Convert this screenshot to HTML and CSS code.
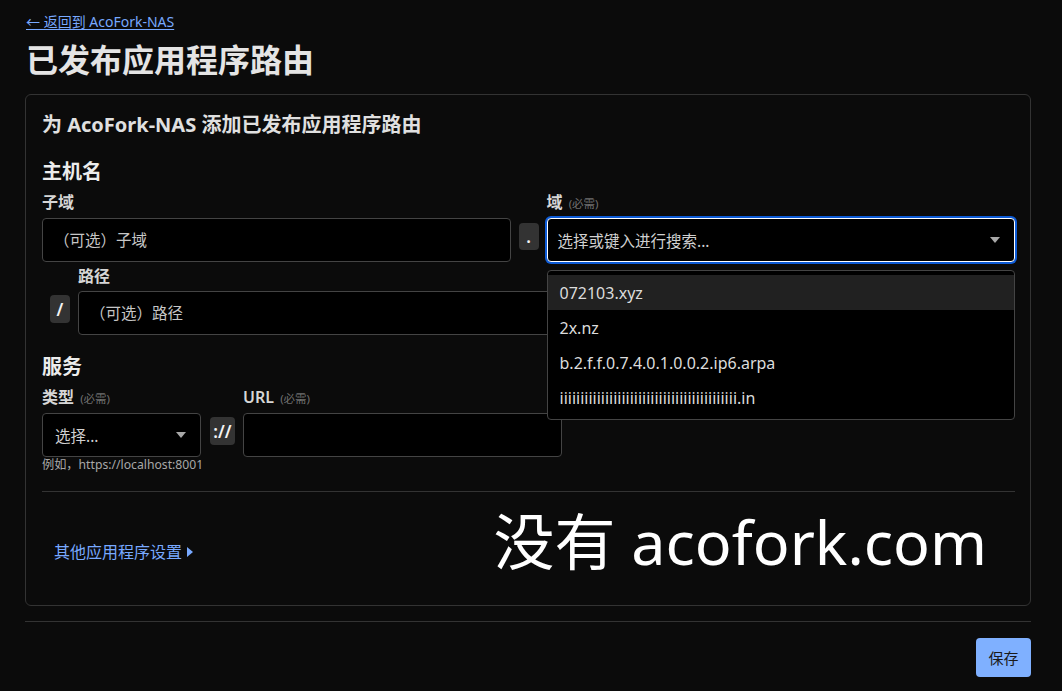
FILE: index.html
```html
<!DOCTYPE html>
<html lang="zh-CN">
<head>
<meta charset="utf-8">
<title>已发布应用程序路由</title>
<link rel="stylesheet" href="styles.css">
</head>
<body>
<a class="back-link" href="#">← 返回到 AcoFork-NAS</a>
<h1 class="page-title">已发布应用程序路由</h1>

<section class="card">
  <h2 class="card-title">为 AcoFork-NAS 添加已发布应用程序路由</h2>

  <h3 class="group-title">主机名</h3>
  <div class="host-row">
    <div class="field field-grow">
      <label class="label">子域</label>
      <input class="input" type="text" placeholder="（可选）子域">
    </div>
    <span class="sep sep-dot">.</span>
    <div class="field field-grow">
      <label class="label">域 <span class="req">(必需)</span></label>
      <div class="combo">
        <div class="select is-focused">
          <span class="select-text">选择或键入进行搜索...</span>
          <span class="caret"></span>
        </div>
        <ul class="menu">
          <li class="menu-item is-active">072103.xyz</li>
          <li class="menu-item">2x.nz</li>
          <li class="menu-item">b.2.f.f.0.7.4.0.1.0.0.2.ip6.arpa</li>
          <li class="menu-item">iiiiiiiiiiiiiiiiiiiiiiiiiiiiiiiiiiiiiiiiiii.in</li>
        </ul>
      </div>
    </div>
  </div>

  <div class="path-block">
    <label class="label path-label">路径</label>
    <div class="path-row">
      <span class="sep sep-slash">/</span>
      <input class="input path-input" type="text" placeholder="（可选）路径">
    </div>
  </div>

  <h3 class="group-title service-title">服务</h3>
  <div class="service-row">
    <div class="field field-type">
      <label class="label">类型 <span class="req">(必需)</span></label>
      <div class="select">
        <span class="select-text">选择...</span>
        <span class="caret"></span>
      </div>
      <p class="hint">例如，https://localhost:8001</p>
    </div>
    <span class="sep sep-scheme">://</span>
    <div class="field field-url">
      <label class="label">URL <span class="req">(必需)</span></label>
      <input class="input" type="text">
    </div>
  </div>

  <div class="settings-row">
    <a class="more-link" href="#">其他应用程序设置 <span class="tri"></span></a>
    <span class="notice">没有 acofork.com</span>
  </div>
</section>

<div class="footer">
  <button class="btn-save" type="button">保存</button>
</div>
</body>
</html>
```

FILE: styles.css
```css
* {
  box-sizing: border-box;
}

body {
  margin: 0;
  padding: 10px 31px 14px 25px;
  background: #0b0b0b;
  color: #e0e0e0;
  font-family: "Noto Sans", "Noto Sans CJK SC", sans-serif;
}

.back-link {
  display: inline-block;
  margin-left: 1px;
  font-size: 14px;
  line-height: 18px;
  color: #78a9ff;
  text-decoration: underline;
  text-underline-offset: 2px;
}

.page-title {
  margin: 8px 0 14px 1px;
  font-size: 32px;
  line-height: 40px;
  font-weight: 700;
  color: #e4e4e4;
}

/* main form card */
.card {
  border: 1px solid #333;
  border-radius: 6px;
  padding: 16px 15px 16px 16px;
}

.card-title {
  margin: 0;
  font-size: 20px;
  line-height: 28px;
  font-weight: 700;
  color: #e0e0e0;
}

.group-title {
  margin: 20px 0 0;
  font-size: 20px;
  line-height: 26px;
  font-weight: 700;
  color: #ececec;
}

.label {
  display: block;
  height: 20px;
  font-size: 16px;
  line-height: 20px;
  font-weight: 600;
  color: #d6d6d6;
}

.req {
  margin-left: 2px;
  font-size: 11.5px;
  line-height: 1;
  font-weight: 400;
  color: #6f6f6f;
}

.field {
  display: flex;
  flex-direction: column;
  gap: 6px;
}

.input {
  height: 44px;
  width: 100%;
  padding: 0 11px;
  background: #000;
  border: 1px solid #444;
  border-radius: 4px;
  color: #e0e0e0;
  font-family: "Noto Sans", "Noto Sans CJK SC", sans-serif;
  font-size: 15.5px;
  outline: none;
}

.input::placeholder {
  color: #c6c6c6;
}

.sep {
  display: flex;
  align-items: center;
  justify-content: center;
  height: 28px;
  background: #333;
  border-radius: 4px;
  color: #f4f4f4;
  font-size: 17px;
  font-weight: 600;
  line-height: 1;
}

/* hostname: subdomain . domain */
.host-row {
  display: flex;
  align-items: flex-end;
  gap: 8px;
  margin-top: 7px;
}

.field-grow {
  flex: 1 1 0;
  min-width: 0;
}

.sep-dot {
  width: 20px;
  margin-bottom: 12px;
  height: 27px;
}

.combo {
  position: relative;
}

.select {
  position: relative;
  display: flex;
  align-items: center;
  height: 44px;
  padding: 0 12px;
  background: #000;
  border: 1px solid #444;
  border-radius: 4px;
  font-size: 15.5px;
  color: #d0d0d0;
}

.select.is-focused {
  border-color: #fff;
  box-shadow: 0 0 0 2px #0d5bd6;
  padding-left: 10px;
}

.select-text {
  flex: 1;
}

.caret {
  width: 0;
  height: 0;
  border-left: 5px solid transparent;
  border-right: 5px solid transparent;
  border-top: 6px solid #a8a8a8;
  margin-right: 2px;
}

.menu {
  position: absolute;
  z-index: 5;
  top: 52px;
  left: 0;
  right: 0;
  margin: 0;
  padding: 4px 0;
  list-style: none;
  background: #000;
  border: 1px solid #444;
  border-radius: 4px;
}

.menu-item {
  height: 35px;
  padding: 0 12px;
  display: flex;
  align-items: center;
  font-size: 16px;
  color: #dcdcdc;
}

.menu-item.is-active {
  background: #212121;
}

/* path */
.path-block {
  margin-top: 4px;
  padding-left: 8px;
}

.path-label {
  margin-left: 28px;
}

.path-row {
  display: flex;
  align-items: flex-start;
  gap: 8px;
  margin-top: 5px;
}

.sep-slash {
  width: 20px;
  margin-top: 4px;
}

.path-input {
  flex: 1;
}

/* service */
.service-title {
  margin-top: 19px;
}

.service-row {
  display: flex;
  align-items: flex-start;
  gap: 8px;
  margin-top: 7px;
}

.field-type {
  width: 159px;
  gap: 6px;
}

.field-type .hint {
  margin: -6px 0 0;
}

.hint {
  font-size: 12.2px;
  line-height: 16px;
  color: #a8a8a8;
  white-space: nowrap;
}

.sep-scheme {
  width: 25px;
  margin-top: 30px;
  margin-left: 1px;
}

.field-url {
  width: 319px;
}

/* bottom of card */
.settings-row {
  display: flex;
  align-items: center;
  justify-content: space-between;
  margin-top: 18px;
  border-top: 1px solid #333;
  padding: 13px 28px 0 12px;
  height: 98px;
}

.more-link {
  margin-top: 10px;
  font-size: 16px;
  line-height: 20px;
  color: #78a9ff;
  text-decoration: none;
  display: flex;
  align-items: center;
  gap: 5px;
}

.tri {
  width: 0;
  height: 0;
  border-top: 5px solid transparent;
  border-bottom: 5px solid transparent;
  border-left: 6px solid #78a9ff;
}

.notice {
  margin-bottom: 10px;
  font-size: 61px;
  line-height: 80px;
  color: #fff;
  font-weight: 400;
  white-space: nowrap;
}

/* actions */
.footer {
  margin-top: 15px;
  padding-top: 16px;
  border-top: 1px solid #333;
  display: flex;
  justify-content: flex-end;
}

.btn-save {
  width: 55px;
  height: 39px;
  background: #7fb0ff;
  border: none;
  border-radius: 4px;
  color: #1a1a1a;
  font-family: "Noto Sans", "Noto Sans CJK SC", sans-serif;
  font-size: 15px;
  padding: 0;
}
```
